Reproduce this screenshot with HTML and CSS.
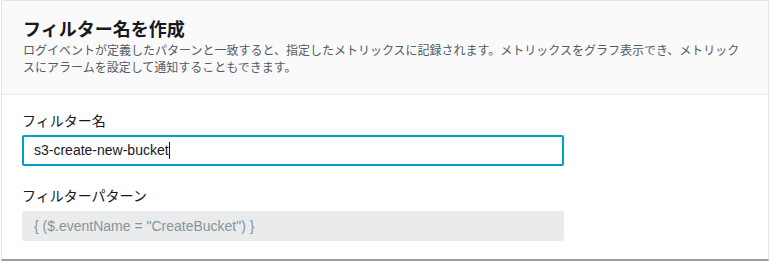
FILE: index.html
```html
<!DOCTYPE html>
<html lang="ja">
<head>
  <meta charset="UTF-8" />
  <title>フィルター名を作成</title>
  <link rel="stylesheet" href="styles.css">
</head>
<body>
  <div class="panel">
    <div class="panel-header">
      <h2>フィルター名を作成</h2>
      <p class="desc">ログイベントが定義したパターンと一致すると、指定したメトリックスに記録されます。メトリックスをグラフ表示でき、メトリックスにアラームを設定して通知することもできます。</p>
    </div>

    <div class="panel-body">
      <label class="field-label" for="filterName">フィルター名</label>
      <div class="input focused" id="filterName">s3-create-new-bucket<span class="caret"></span></div>

      <label class="field-label second">フィルターパターン</label>
      <div class="input disabled">{ ($.eventName = "CreateBucket") }</div>
    </div>
  </div>
</body>
</html>
```

FILE: styles.css
```css
body {
  margin: 0;
  font-family: "Liberation Sans", "Noto Sans CJK JP", sans-serif;
  color: #16191f;
  background: #fff;
}

.panel {
  margin-left: 1px;
  width: 768px;
  box-sizing: border-box;
  border: 1px solid #e4e7e8;
  border-bottom: 2px solid #95a0a1;
  background: #fff;
}

.panel-header {
  background: #fafafa;
  border-bottom: 1px solid #e9ebed;
  padding: 16px 22px 17px 21px;
}

.panel-header h2 {
  margin: 0;
  font-size: 18px;
  line-height: 26px;
  font-weight: bold;
  color: #16191f;
}

.desc {
  margin: 0;
  font-size: 12px;
  line-height: 17px;
  color: #545b64;
}

.panel-body {
  padding: 16px 20px 18px 20px;
}

.field-label {
  display: block;
  font-size: 14px;
  line-height: 20px;
  color: #16191f;
}

.field-label.second {
  margin-top: 20px;
}

.input {
  width: 542px;
  box-sizing: border-box;
  margin-top: 4px;
  padding: 0 10px;
  font-size: 14px;
  border-radius: 2px;
  white-space: nowrap;
}

.input.focused {
  height: 31px;
  line-height: 27px;
  border: 2px solid #00a1c9;
  color: #16191f;
}

.caret {
  display: inline-block;
  width: 1px;
  height: 17px;
  background: #16191f;
  vertical-align: -4px;
}

.input.disabled {
  margin-top: 5px;
  height: 30px;
  line-height: 30px;
  padding: 0 12px;
  background: #e9ebed;
  color: #879596;
}
```
